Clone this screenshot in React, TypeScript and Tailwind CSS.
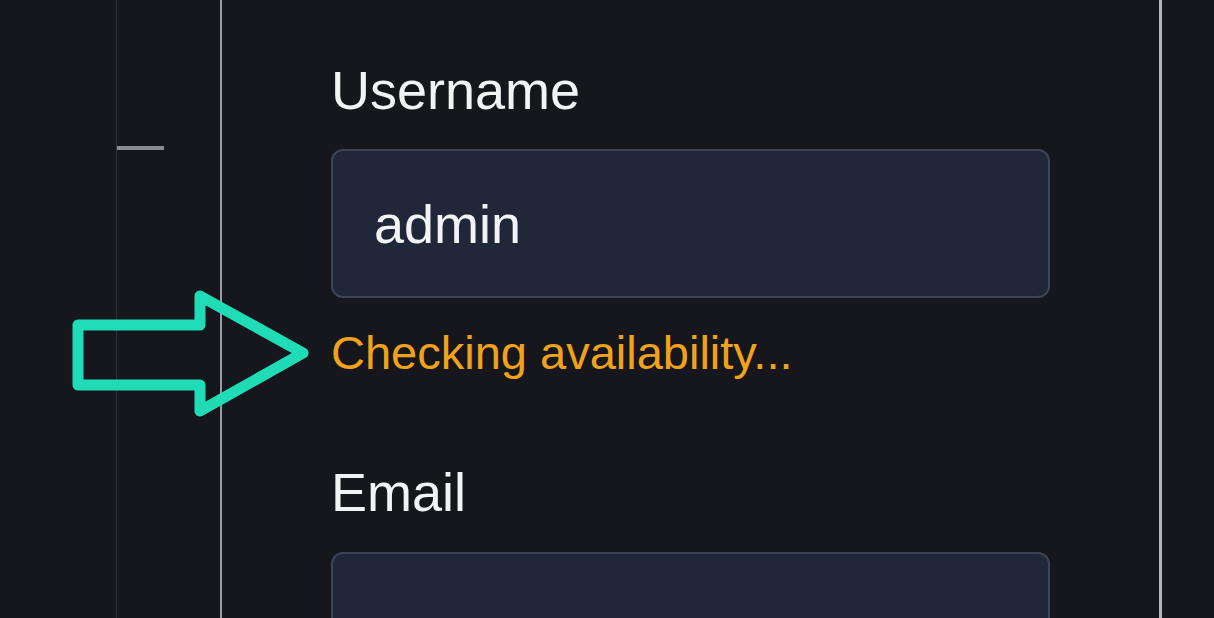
import { useState } from "react";

// zoomed view of a sign-up form: username check in progress
export default function App() {
  const [username, setUsername] = useState("admin");
  const [email, setEmail] = useState("");

  return (
    <div
      className="relative flex h-[618px] w-full overflow-hidden bg-[#16171d]"
      style={{ fontFamily: '"Liberation Sans", Arial, sans-serif' }}
    >
      {/* outer gutter */}
      <div className="w-[116px] shrink-0" />

      {/* side rail with tick */}
      <div className="w-[104px] shrink-0 border-l border-[#30313a]">
        <div className="mt-[146px] h-[4px] w-[47px] bg-[#8a8b92]" />
      </div>

      {/* form column */}
      <div className="w-[942px] shrink-0 border-l-2 border-r-[3px] border-l-[#9c9ca4] border-r-[#b4b4bc] pl-[109px]">
        <label className="mt-[64px] block text-[54px] leading-[53px] text-[#f2f3f5]">
          Username
        </label>
        <input
          value={username}
          onChange={(e) => setUsername(e.target.value)}
          className="mt-[32px] block h-[149px] w-[719px] rounded-[12px] border-2 border-[#3c4557] bg-[#1f2738] pl-[41px] text-[54px] leading-[54px] text-[#f2f3f5] outline-none"
        />
        <p className="mt-[32px] text-[47px] leading-[46px] text-[#f0a21c]">
          Checking availability...
        </p>

        <label className="mt-[90px] block text-[54px] leading-[53px] text-[#f2f3f5]">
          Email
        </label>
        <input
          value={email}
          onChange={(e) => setEmail(e.target.value)}
          className="mt-[33px] block h-[149px] w-[719px] rounded-[12px] border-2 border-[#3c4557] bg-[#1f2738] pl-[41px] text-[54px] leading-[54px] text-[#f2f3f5] outline-none"
        />
      </div>

      <div className="flex-1" />

      {/* callout arrow */}
      <svg
        className="pointer-events-none absolute left-0 top-0"
        width="330"
        height="440"
        viewBox="0 0 330 440"
      >
        <path
          d="M78 325 L200 325 L200 296 L303 353 L200 411 L200 385 L78 385 Z"
          fill="none"
          stroke="#20dcb6"
          strokeWidth="11"
          strokeLinejoin="round"
        />
      </svg>
    </div>
  );
}
